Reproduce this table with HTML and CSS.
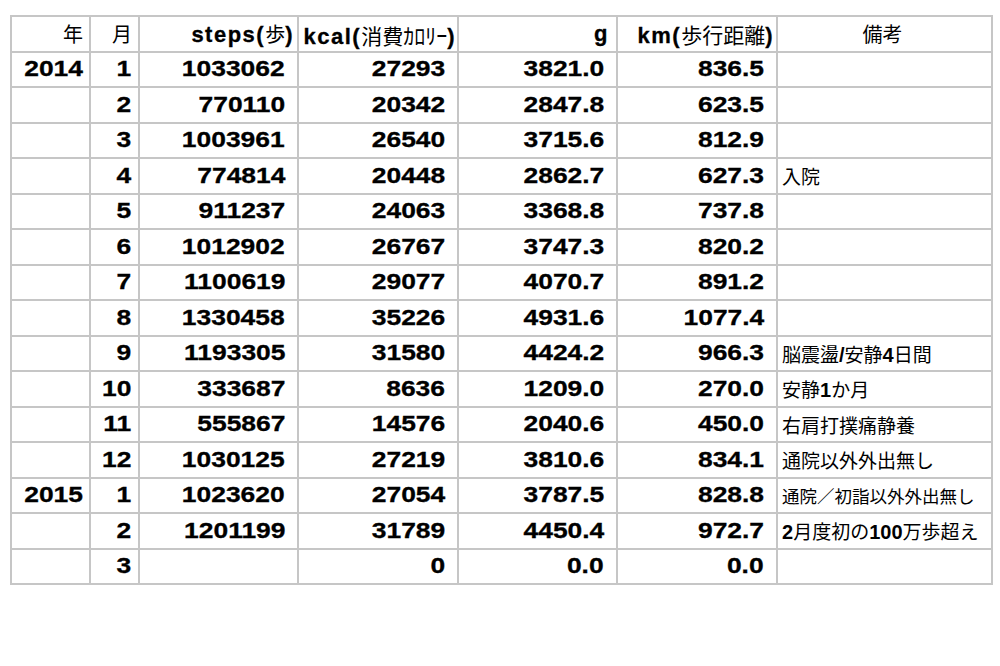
FILE: index.html
```html
<!DOCTYPE html>
<html lang="ja">
<head>
<meta charset="utf-8">
<link rel="stylesheet" href="styles.css">
</head>
<body>
<table class="sheet">
  <colgroup>
    <col class="c-year"><col class="c-month"><col class="c-steps"><col class="c-kcal"><col class="c-g"><col class="c-km"><col class="c-note">
  </colgroup>
  <thead>
    <tr>
      <th class="h-yr">年</th>
      <th class="h-mo">月</th>
      <th class="h-num"><b>steps(</b>歩<b>)</b></th>
      <th class="h-num h-kcal"><b>kcal(</b>消費<span class="hw">ｶﾛﾘｰ</span><b>)</b></th>
      <th class="h-num h-g"><b>g</b></th>
      <th class="h-num h-km"><b>km(</b>歩行距離<b>)</b></th>
      <th class="h-note">備考</th>
    </tr>
  </thead>
  <tbody>
    <tr><td class="yr"><span class="n">2014</span></td><td class="mo"><span class="n">1</span></td><td class="num"><span class="n">1033062</span></td><td class="num"><span class="n">27293</span></td><td class="num"><span class="n">3821.0</span></td><td class="num"><span class="n">836.5</span></td><td class="note"></td></tr>
    <tr><td class="yr"></td><td class="mo"><span class="n">2</span></td><td class="num"><span class="n">770110</span></td><td class="num"><span class="n">20342</span></td><td class="num"><span class="n">2847.8</span></td><td class="num"><span class="n">623.5</span></td><td class="note"></td></tr>
    <tr><td class="yr"></td><td class="mo"><span class="n">3</span></td><td class="num"><span class="n">1003961</span></td><td class="num"><span class="n">26540</span></td><td class="num"><span class="n">3715.6</span></td><td class="num"><span class="n">812.9</span></td><td class="note"></td></tr>
    <tr><td class="yr"></td><td class="mo"><span class="n">4</span></td><td class="num"><span class="n">774814</span></td><td class="num"><span class="n">20448</span></td><td class="num"><span class="n">2862.7</span></td><td class="num"><span class="n">627.3</span></td><td class="note">入院</td></tr>
    <tr><td class="yr"></td><td class="mo"><span class="n">5</span></td><td class="num"><span class="n">911237</span></td><td class="num"><span class="n">24063</span></td><td class="num"><span class="n">3368.8</span></td><td class="num"><span class="n">737.8</span></td><td class="note"></td></tr>
    <tr><td class="yr"></td><td class="mo"><span class="n">6</span></td><td class="num"><span class="n">1012902</span></td><td class="num"><span class="n">26767</span></td><td class="num"><span class="n">3747.3</span></td><td class="num"><span class="n">820.2</span></td><td class="note"></td></tr>
    <tr><td class="yr"></td><td class="mo"><span class="n">7</span></td><td class="num"><span class="n">1100619</span></td><td class="num"><span class="n">29077</span></td><td class="num"><span class="n">4070.7</span></td><td class="num"><span class="n">891.2</span></td><td class="note"></td></tr>
    <tr><td class="yr"></td><td class="mo"><span class="n">8</span></td><td class="num"><span class="n">1330458</span></td><td class="num"><span class="n">35226</span></td><td class="num"><span class="n">4931.6</span></td><td class="num"><span class="n">1077.4</span></td><td class="note"></td></tr>
    <tr><td class="yr"></td><td class="mo"><span class="n">9</span></td><td class="num"><span class="n">1193305</span></td><td class="num"><span class="n">31580</span></td><td class="num"><span class="n">4424.2</span></td><td class="num"><span class="n">966.3</span></td><td class="note">脳震盪<b>/</b>安静<b>4</b>日間</td></tr>
    <tr><td class="yr"></td><td class="mo"><span class="n">10</span></td><td class="num"><span class="n">333687</span></td><td class="num"><span class="n">8636</span></td><td class="num"><span class="n">1209.0</span></td><td class="num"><span class="n">270.0</span></td><td class="note">安静<b>1</b>か月</td></tr>
    <tr><td class="yr"></td><td class="mo"><span class="n">11</span></td><td class="num"><span class="n">555867</span></td><td class="num"><span class="n">14576</span></td><td class="num"><span class="n">2040.6</span></td><td class="num"><span class="n">450.0</span></td><td class="note">右肩打撲痛静養</td></tr>
    <tr><td class="yr"></td><td class="mo"><span class="n">12</span></td><td class="num"><span class="n">1030125</span></td><td class="num"><span class="n">27219</span></td><td class="num"><span class="n">3810.6</span></td><td class="num"><span class="n">834.1</span></td><td class="note">通院以外外出無し</td></tr>
    <tr><td class="yr"><span class="n">2015</span></td><td class="mo"><span class="n">1</span></td><td class="num"><span class="n">1023620</span></td><td class="num"><span class="n">27054</span></td><td class="num"><span class="n">3787.5</span></td><td class="num"><span class="n">828.8</span></td><td class="note note-sm">通院／初詣以外外出無し</td></tr>
    <tr><td class="yr"></td><td class="mo"><span class="n">2</span></td><td class="num"><span class="n">1201199</span></td><td class="num"><span class="n">31789</span></td><td class="num"><span class="n">4450.4</span></td><td class="num"><span class="n">972.7</span></td><td class="note"><b>2</b>月度初の<b>100</b>万歩超え</td></tr>
    <tr><td class="yr"></td><td class="mo"><span class="n">3</span></td><td class="num"></td><td class="num"><span class="n">0</span></td><td class="num"><span class="n">0.0</span></td><td class="num"><span class="n">0.0</span></td><td class="note"></td></tr>
  </tbody>
</table>
</body>
</html>
```

FILE: styles.css
```css
html, body {
  margin: 0;
  padding: 0;
  background: #ffffff;
}

body {
  font-family: "Liberation Sans", "Noto Sans CJK JP", sans-serif;
  color: #000000;
}

.sheet {
  border-collapse: collapse;
  margin: 15px 0 0 10px;
  table-layout: fixed;
  width: 981px;
}

.c-year { width: 79px; }
.c-month { width: 49px; }
.c-steps { width: 159px; }
.c-kcal { width: 160px; }
.c-g { width: 159px; }
.c-km { width: 160px; }
.c-note { width: 215px; }

.sheet th,
.sheet td {
  border: 2px solid #c6c6c6;
  height: 33.5px;
  padding: 0;
  white-space: nowrap;
  overflow: visible;
  vertical-align: middle;
}

.sheet th {
  font-weight: normal;
  font-size: 20px;
}

.sheet th b {
  font-weight: bold;
  font-size: 22px;
  letter-spacing: 1.5px;
  -webkit-text-stroke: 0.3px #000000;
}

.sheet .h-kcal,
.sheet .h-km {
  font-size: 21px;
}

.sheet th .hw {
  font-size: 22px;
}

.sheet .h-yr,
.sheet .h-mo { text-align: right; padding-right: 6px; }
.sheet .h-num { text-align: right; padding-right: 3px; }
.sheet .h-kcal { padding-right: 1px; }
.sheet .h-g { padding-right: 7px; }
.sheet .h-km { padding-right: 2px; }
.sheet .h-note { text-align: center; padding-right: 4px; }

.sheet .yr,
.sheet .mo,
.sheet .num {
  font-weight: bold;
  font-size: 22px;
  text-align: right;
}

.sheet .yr { padding-right: 6px; }
.sheet .mo { padding-right: 7px; }
.sheet .num { padding-right: 12px; }

.n {
  display: inline-block;
  transform: scaleX(1.2);
  transform-origin: right center;
  -webkit-text-stroke: 0.3px #000000;
}

.sheet .note {
  font-size: 19px;
  padding-left: 4px;
  text-align: left;
}

.sheet .note b {
  font-size: 20px;
}

.sheet .note-sm {
  font-size: 17.5px;
}
```
